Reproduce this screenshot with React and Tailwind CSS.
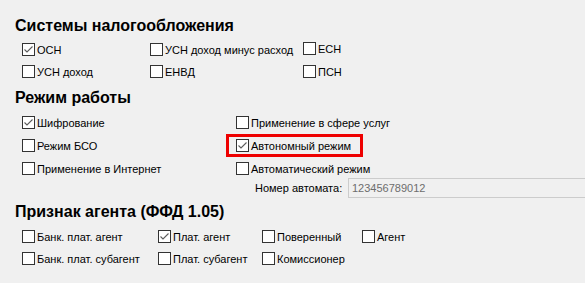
import React from "react";

function Box({ checked }) {
  return (
    <span className="w-[13px] h-[13px] shrink-0 border border-[#333333] bg-white flex items-center justify-center">
      {checked && (
        <svg width="11" height="11" viewBox="0 0 11 11">
          <path d="M1.5 5.5 L4 8 L9.5 2.5" fill="none" stroke="#5c5c5c" strokeWidth="1.1" />
        </svg>
      )}
    </span>
  );
}

function Item({ label, checked }) {
  return (
    <div className="flex items-start h-[13px] gap-[2px]">
      <Box checked={checked} />
      <span className="leading-[13px] pt-[1px] whitespace-nowrap">{label}</span>
    </div>
  );
}

function Heading({ children, className = "" }) {
  return (
    <h2 className={"pl-[15px] text-[16px] font-bold leading-[20px] " + className}>{children}</h2>
  );
}

export default function App() {
  return (
    <div className="w-[585px] h-[283px] bg-[#f0f0f0] overflow-hidden relative text-black text-[11px] font-['Liberation_Sans',Arial,sans-serif]">
      <Heading className="pt-[16px]">Системы налогообложения</Heading>
      <div className="flex pl-[22px] mt-[7px]">
        <div className="w-[128px] flex flex-col gap-[9px]">
          <Item label="ОСН" checked />
          <Item label="УСН доход" />
        </div>
        <div className="w-[153px] flex flex-col gap-[9px]">
          <Item label="УСН доход минус расход" />
          <Item label="ЕНВД" />
        </div>
        <div className="flex flex-col gap-[10px] -mt-[1px]">
          <Item label="ЕСН" />
          <Item label="ПСН" />
        </div>
      </div>

      <Heading className="mt-[10px]">Режим работы</Heading>
      <div className="flex pl-[22px] mt-[8px]">
        <div className="w-[214px] flex flex-col gap-[10px]">
          <Item label="Шифрование" checked />
          <Item label="Режим БСО" />
          <Item label="Применение в Интернет" />
        </div>
        <div className="flex flex-col gap-[10px]">
          <Item label="Применение в сфере услуг" />
          <Item label="Автономный режим" checked />
          <Item label="Автоматический режим" />
        </div>
      </div>
      <div className="flex items-center h-[20px] mt-[3px] pl-[255px]">
        <span className="w-[93px] whitespace-nowrap">Номер автомата:</span>
        <div className="flex-1 h-[20px] border border-[#cccccc] bg-[#f0f0f0] flex items-center pl-[3px] text-[#6d6d6d] -mr-[10px]">
          123456789012
        </div>
      </div>

      <Heading className="mt-[4px]">Признак агента (ФФД 1.05)</Heading>
      <div className="flex pl-[22px] mt-[8px]">
        <div className="w-[136px] flex flex-col gap-[9px]">
          <Item label="Банк. плат. агент" />
          <Item label="Банк. плат. субагент" />
        </div>
        <div className="w-[104px] flex flex-col gap-[9px]">
          <Item label="Плат. агент" checked />
          <Item label="Плат. субагент" />
        </div>
        <div className="w-[100px] flex flex-col gap-[9px]">
          <Item label="Поверенный" />
          <Item label="Комиссионер" />
        </div>
        <div className="flex flex-col gap-[9px]">
          <Item label="Агент" />
        </div>
      </div>

      <div className="absolute left-[226px] top-[134px] w-[137px] h-[23px] border-[3px] border-[#ee0000] pointer-events-none" />
    </div>
  );
}
